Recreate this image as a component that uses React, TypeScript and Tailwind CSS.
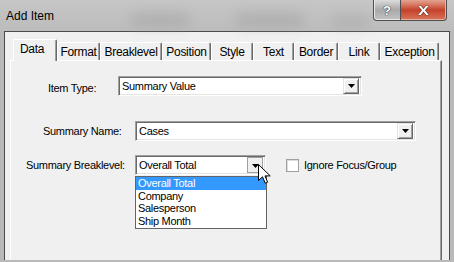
import React from 'react';

const font = { fontFamily: '"Liberation Sans", Arial, sans-serif' };

const tabs = [
  { label: 'Data', w: 'w-[44px]' },
  { label: 'Format', w: 'w-[43px]' },
  { label: 'Breaklevel', w: 'w-[62px]' },
  { label: 'Position', w: 'w-[49px]' },
  { label: 'Style', w: 'w-[42px]' },
  { label: 'Text', w: 'w-[41px]' },
  { label: 'Border', w: 'w-[44px]' },
  { label: 'Link', w: 'w-[42px]' },
  { label: 'Exception', w: 'w-[59px]' },
];

function Arrow() {
  return (
    <svg width="7" height="4" viewBox="0 0 7 4">
      <path d="M0 0H7L3.5 4Z" fill="#000" />
    </svg>
  );
}

function Combo({ value, w, pressed }: { value: string; w: string; pressed?: boolean }) {
  return (
    <div
      className={`${w} h-[20px] flex items-center bg-white border border-t-[#a0a0a0] border-l-[#a0a0a0] border-b-white border-r-white shadow-[inset_1px_1px_0_#696969,inset_-1px_-1px_0_#e3e3e3] pl-[3px] pr-[2px]`}
    >
      <span className="flex-1 text-[11px] tracking-[-0.3px] text-black leading-none">{value}</span>
      {pressed ? (
        <div className="w-[16px] h-[16px] bg-[#f0f0f0] border border-[#a0a0a0] flex items-center justify-center pl-px pt-px">
          <Arrow />
        </div>
      ) : (
        <div className="w-[16px] h-[16px] bg-[#f0f0f0] border border-t-[#e3e3e3] border-l-[#e3e3e3] border-b-[#696969] border-r-[#696969] shadow-[inset_1px_1px_0_#fff,inset_-1px_-1px_0_#a0a0a0] flex items-center justify-center">
          <Arrow />
        </div>
      )}
    </div>
  );
}

export default function App() {
  return (
    <div className="relative w-[454px] h-[262px] overflow-hidden bg-[#b9b9b9] flex flex-col" style={font}>
      {/* Title bar */}
      <div className="relative h-[31px] flex items-start justify-between bg-gradient-to-b from-[#c6c6c6] to-[#bcbcbc]">
        <div className="absolute left-[130px] top-[12px] w-[60px] h-[16px] rounded-full bg-[#9c9c9c] opacity-40 blur-[6px]" />
        <div className="absolute left-[235px] top-[12px] w-[70px] h-[16px] rounded-full bg-[#9c9c9c] opacity-40 blur-[6px]" />
        <div className="absolute left-[330px] top-[14px] w-[40px] h-[14px] rounded-full bg-[#a4a4a4] opacity-40 blur-[6px]" />
        <span className="relative pl-[6px] pt-[10px] text-[12px] text-black leading-none">Add Item</span>
        <div className="relative flex mr-[7px]">
          <div className="w-[28px] h-[21px] rounded-bl-[4px] border border-t-0 border-[#4f4f4f] bg-gradient-to-b from-[#dcdcdc] via-[#a8a8a8] to-[#c4c4c4] shadow-[inset_0_-1px_0_#e8e8e8,inset_1px_0_0_#e8e8e8] flex items-center justify-center">
            <span className="text-[13px] font-bold text-white leading-none [text-shadow:0_0_1px_#222,0_0_1px_#222]">?</span>
          </div>
          <div className="w-[46px] h-[21px] rounded-br-[4px] border border-t-0 border-l-0 border-[#4f4f4f] bg-gradient-to-b from-[#e3a392] via-[#c4412a] to-[#d8745a] shadow-[inset_0_-1px_0_#eab0a0,inset_-1px_0_0_#eab0a0] flex items-center justify-center">
            <span className="text-[13px] font-bold text-white leading-none scale-x-125 [text-shadow:0_0_1px_#222,0_0_1px_#222]">X</span>
          </div>
        </div>
      </div>

      {/* Client area */}
      <div className="ml-[4px] w-[446px] h-[229px] border border-b-0 border-[#4a4a4a] bg-[#f0f0f0] flex flex-col pt-[7px] pl-[5px] pr-[5px]">
        {/* Tabs */}
        <div className="flex items-end h-[22px] ml-[3px] relative z-10 -mb-px text-[12px] tracking-[-0.3px] text-black">
          {tabs.map((t, i) =>
            i === 0 ? (
              <div
                key={t.label}
                className={`${t.w} h-[22px] bg-[#f0f0f0] border-l border-t border-white rounded-tl-[2px] shadow-[inset_-1px_0_0_#a0a0a0] border-r border-r-[#696969] rounded-tr-[2px] pl-[6px] pt-[3px] leading-none`}
              >
                {t.label}
              </div>
            ) : (
              <div
                key={t.label}
                className={`${t.w} h-[18px] mb-px bg-[#f0f0f0] border-l border-t border-white border-r border-r-[#696969] rounded-tl-[2px] rounded-tr-[2px] shadow-[inset_-1px_0_0_#a0a0a0] flex items-start justify-center pt-[3px] leading-none`}
              >
                {t.label}
              </div>
            )
          )}
        </div>

        {/* Panel */}
        <div className="flex-1 mr-[1px] w-[432px] bg-[#f0f0f0] border-l border-t border-white border-r border-r-[#696969] shadow-[inset_-1px_0_0_#a0a0a0] text-[11px] tracking-[-0.3px] text-black flex flex-col">
          <div className="mt-[15px] h-[20px] flex items-center">
            <span className="ml-[37px] w-[70px] pt-[4px] leading-none">Item Type:</span>
            <Combo value="Summary Value" w="w-[244px]" />
          </div>
          <div className="mt-[25px] h-[20px] flex items-center">
            <span className="ml-[32px] w-[92px] leading-none">Summary Name:</span>
            <Combo value="Cases" w="w-[281px]" />
          </div>
          <div className="relative mt-[14px] h-[20px] flex items-center">
            <span className="ml-[15px] w-[109px] leading-none">Summary Breaklevel:</span>
            <Combo value="Overall Total" w="w-[131px]" pressed />
            <div className="ml-[20px] w-[13px] h-[13px] bg-white border border-[#a0a0a0] shadow-[inset_1px_1px_0_#dcdcdc]" />
            <span className="ml-[5px] leading-none">Ignore Focus/Group</span>

            {/* Dropdown list */}
            <div className="absolute left-[124px] top-[21px] w-[132px] h-[53px] bg-white border border-[#646464] flex flex-col text-[11px]">
              <div className="h-[13px] bg-[#3399ff] text-white pl-[2px] flex items-center leading-none">Overall Total</div>
              <div className="h-[13px] pl-[2px] flex items-center leading-none">Company</div>
              <div className="h-[13px] pl-[2px] flex items-center leading-none">Salesperson</div>
              <div className="h-[13px] pl-[2px] flex items-center leading-none">Ship Month</div>
            </div>
          </div>
        </div>
      </div>

      {/* Mouse cursor */}
      <svg className="absolute left-[258px] top-[164px]" width="13" height="21" viewBox="0 0 13 21">
        <path d="M0.5 0.5V16.5L4.5 12.8L7.2 19.2L9.6 18.2L7 11.9H12.2Z" fill="#fff" stroke="#000" strokeWidth="1" strokeLinejoin="miter" />
      </svg>
    </div>
  );
}
